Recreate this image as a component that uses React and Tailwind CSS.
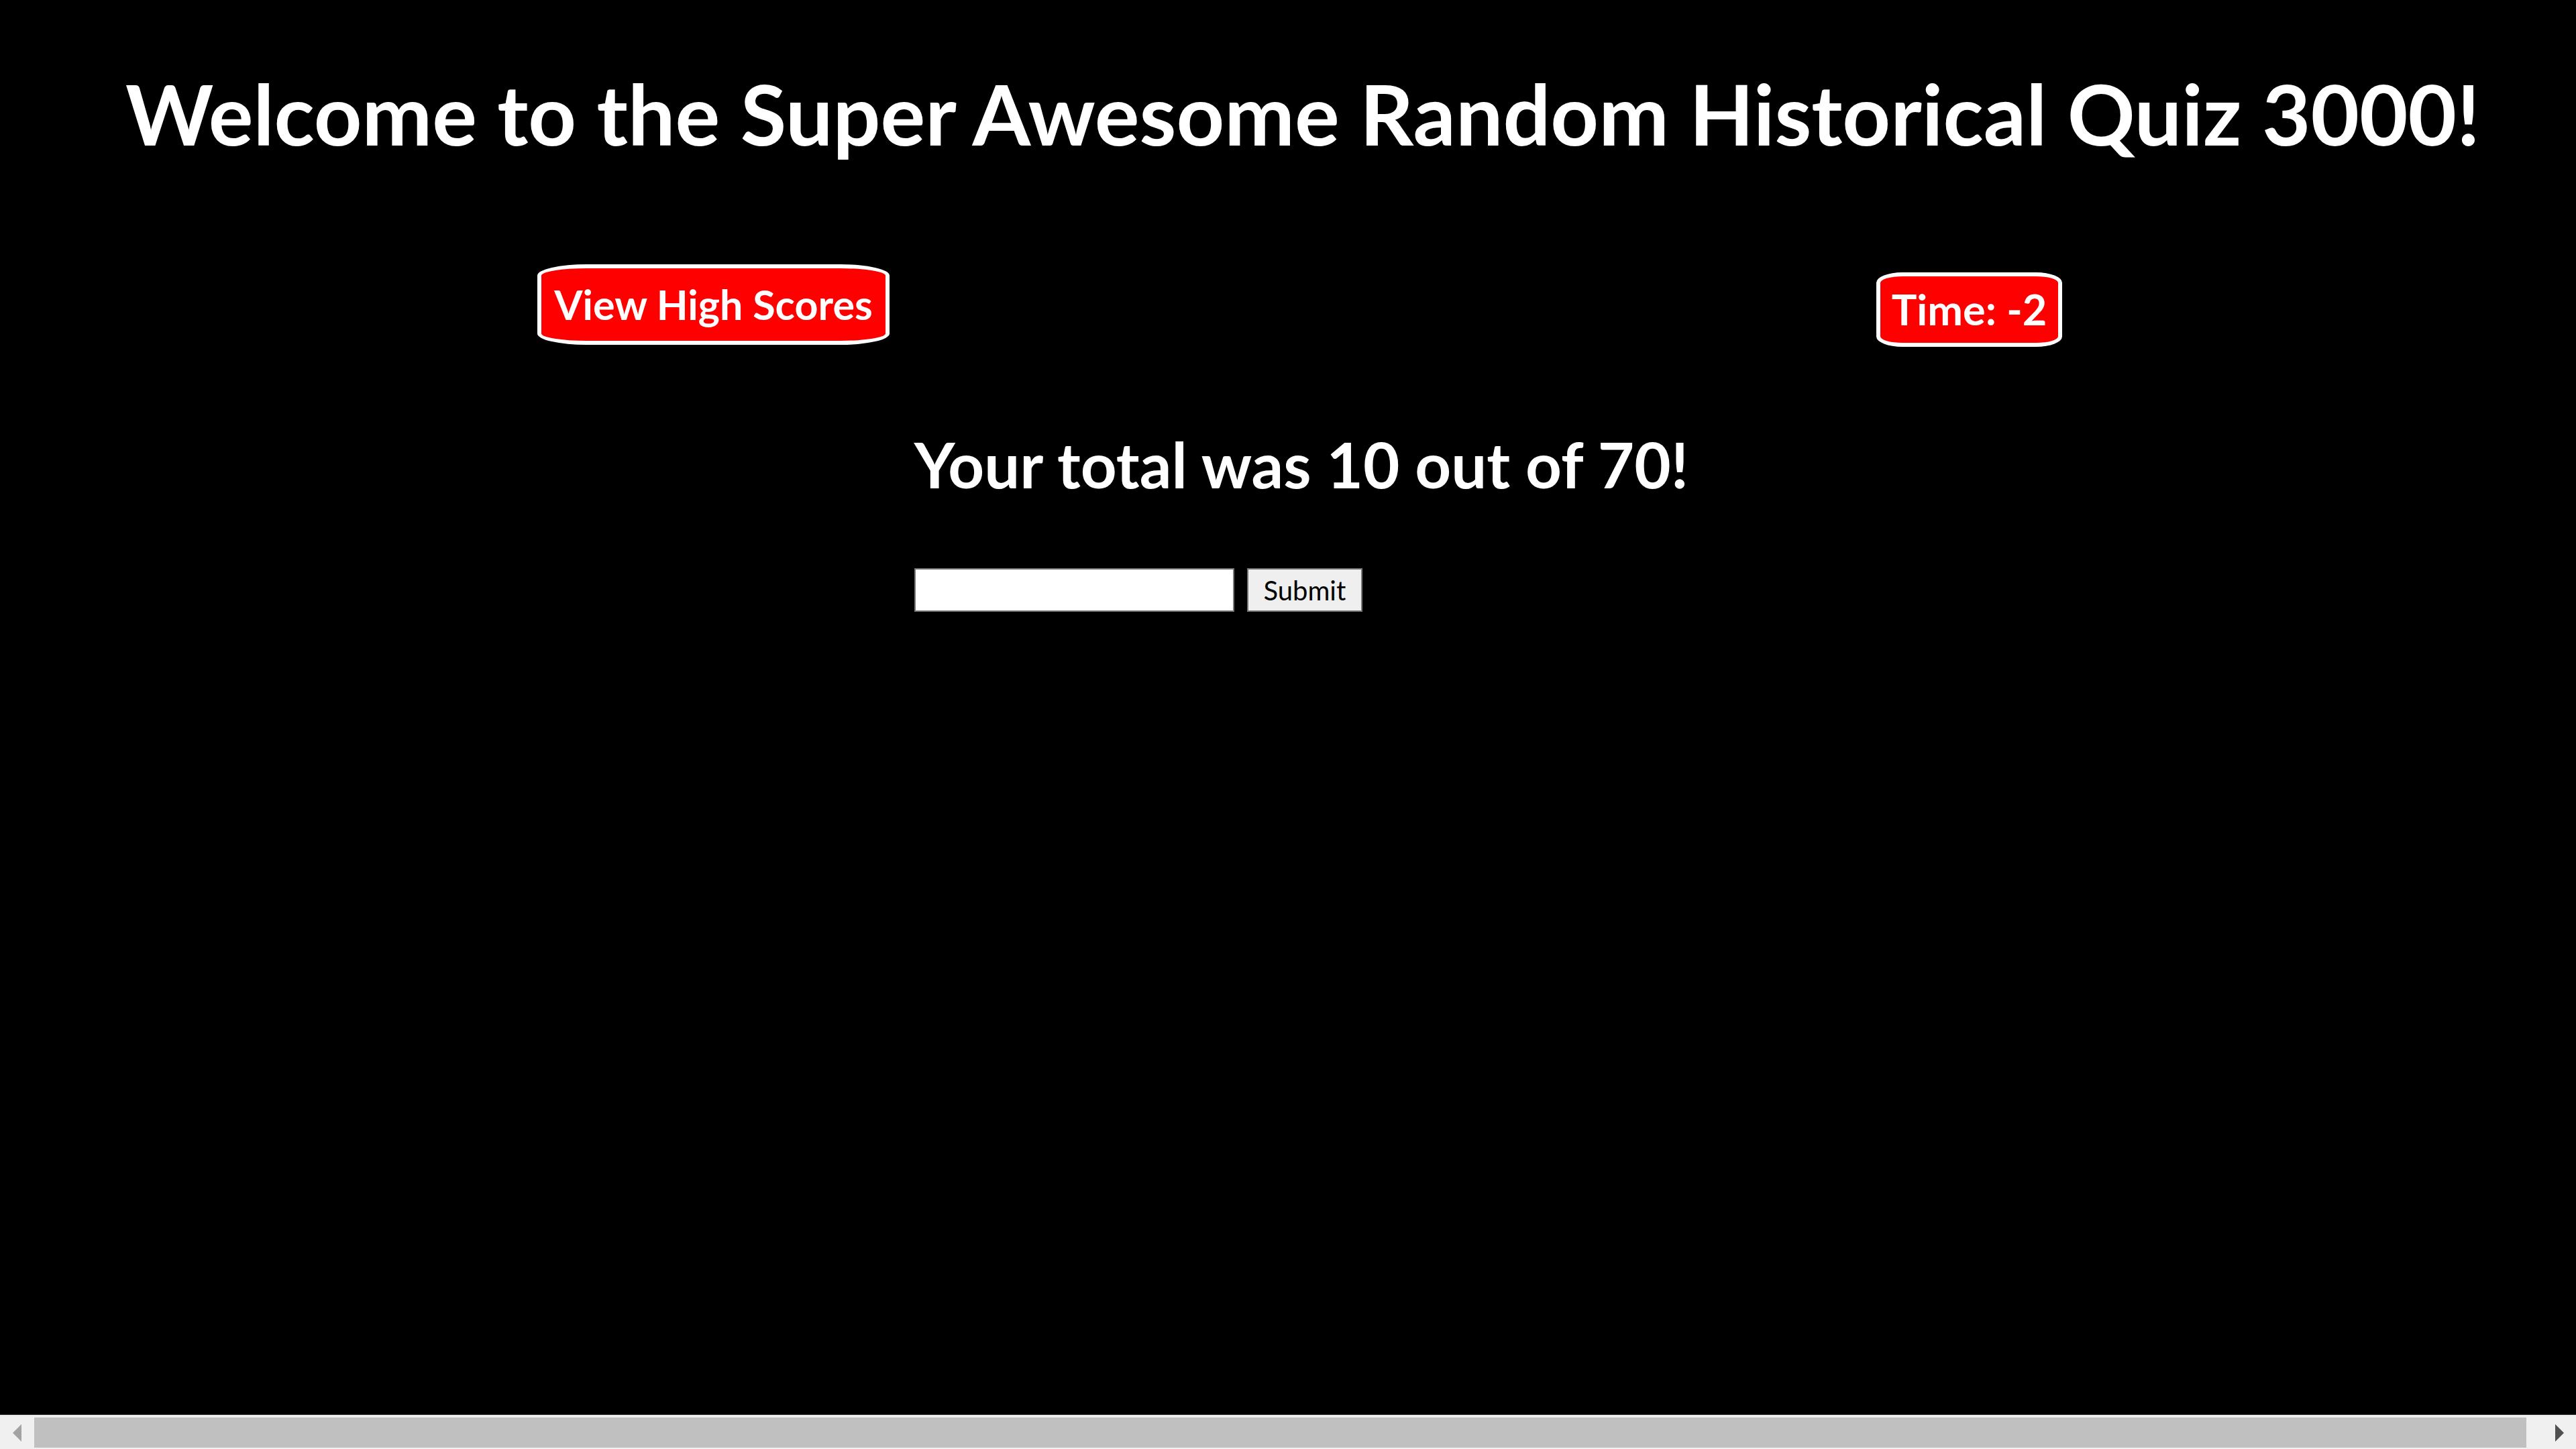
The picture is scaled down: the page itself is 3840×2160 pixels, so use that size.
export default function App() {
  return (
    <div
      className="flex h-screen w-full flex-col overflow-hidden bg-black text-white"
      style={{ fontFamily: "Lato, 'Open Sans', sans-serif" }}
    >
      <div className="flex-1">
        {/* Heading */}
        <h1 className="pl-[44px] pt-[94px] text-center text-[125px] font-bold leading-[150px]">
          Welcome to the Super Awesome Random Historical Quiz 3000!
        </h1>

        {/* Scores + timer row */}
        <div className="mt-[150px] flex items-start justify-between pl-[801px] pr-[766px]">
          <button className="flex h-[120px] w-[525px] items-center justify-center rounded-[14%] border-[6px] border-white bg-[#ff0000] text-[61px] font-bold text-white">
            View High Scores
          </button>
          <div className="mt-[12px] flex h-[111px] w-[277px] items-center justify-center rounded-[14%] border-[6px] border-white bg-[#ff0000] text-[63px] font-bold">
            Time: -2
          </div>
        </div>

        {/* Result + initials */}
        <div className="mt-[118px] flex justify-center pl-[40px]">
          <div>
            <h2 className="text-[94px] font-bold leading-[113px]">Your total was 10 out of 70!</h2>
            <form className="mt-[99px] flex gap-[19px]" onSubmit={(e) => e.preventDefault()}>
              <input
                type="text"
                className="h-[65px] w-[477px] border-2 border-[#767676] bg-white px-2 text-[40px] text-black"
              />
              <button
                type="submit"
                className="h-[65px] w-[172px] border-2 border-[#767676] bg-[#efefef] text-[40px] text-black"
              >
                Submit
              </button>
            </form>
          </div>
        </div>
      </div>

      {/* Horizontal scrollbar */}
      <div className="flex h-[51px] items-stretch border-t-2 border-[#e6e6e6] bg-[#f0f0f0]">
        <div className="flex w-[51px] items-center justify-center">
          <svg width="14" height="26" viewBox="0 0 14 26">
            <path d="M13 0 L0 13 L13 26 Z" fill="#a3a3a3" />
          </svg>
        </div>
        <div className="my-[2px] flex-1 bg-[#c0c0c0]" />
        <div className="w-[23px]" />
        <div className="flex w-[51px] items-center justify-center">
          <svg width="14" height="26" viewBox="0 0 14 26">
            <path d="M1 0 L14 13 L1 26 Z" fill="#505050" />
          </svg>
        </div>
      </div>
    </div>
  );
}
